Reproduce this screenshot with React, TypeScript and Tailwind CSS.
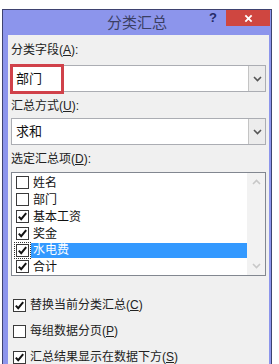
import * as React from "react";

const items = [
  { label: "姓名", checked: false },
  { label: "部门", checked: false },
  { label: "基本工资", checked: true },
  { label: "奖金", checked: true },
  { label: "水电费", checked: true, selected: true },
  { label: "合计", checked: true },
];

function Box({ checked }: { checked: boolean }) {
  return (
    <span className="flex h-[13px] w-[13px] shrink-0 items-center justify-center border border-[#3a3a3a] bg-white">
      {checked && (
        <svg viewBox="0 0 11 11" className="h-[11px] w-[11px]">
          <path d="M1.8 5.6 L4.2 8.2 L9.2 2.2" fill="none" stroke="#111" strokeWidth="2" />
        </svg>
      )}
    </span>
  );
}

function Chevron({ up }: { up?: boolean }) {
  return (
    <svg viewBox="0 0 9 6" className="h-[6px] w-[9px]">
      <path
        d={up ? "M1 5 L4.5 1.5 L8 5" : "M1 1 L4.5 4.5 L8 1"}
        fill="none"
        stroke="currentColor"
        strokeWidth="1.6"
      />
    </svg>
  );
}

function Combo({ value, marked }: { value: string; marked?: boolean }) {
  return (
    <div className="relative flex h-[27px] border border-[#abadb3] bg-white">
      <div className="flex flex-1 items-center pl-[4px] text-[13px] text-[#111]">{value}</div>
      <div className="flex w-[17px] items-center justify-center border-l border-[#c4c4c4] bg-[#ececec] text-[#555]">
        <Chevron />
      </div>
      {marked && (
        <div className="absolute left-[-2px] top-[-2px] h-[30px] w-[54px] border-[3px] border-[#d0414a]" />
      )}
    </div>
  );
}

function Label({ text, k, rest }: { text: string; k: string; rest?: string }) {
  return (
    <div className="h-[16px] text-[12px] leading-[16px] text-[#222]">
      {text}(<span className="underline">{k}</span>){rest ?? ":"}
    </div>
  );
}

export default function App() {
  return (
    <div className="h-[364px] w-[279px] overflow-hidden bg-white font-['Liberation_Sans','Noto_Sans_CJK_SC',sans-serif]">
      <div className="ml-[2px] mt-[9px] w-[270px] border border-[#3e4270] bg-[#8c95ec]">
        <div className="relative flex h-[25px] items-start justify-end">
          <div className="absolute inset-x-0 top-[3px] text-center text-[15px] leading-[20px] text-[#3b3f63]">
            分类汇总
          </div>
          <div className="mr-[9px] mt-[1px] text-[13px] font-bold leading-[14px] text-[#262a66]">?</div>
          <div className="mr-[1px] flex h-[16px] w-[44px] items-center justify-center bg-[#cf4640]">
            <svg viewBox="0 0 10 10" className="h-[9px] w-[9px]">
              <path d="M1.5 1.5 L8.5 8.5 M8.5 1.5 L1.5 8.5" stroke="#fff" strokeWidth="2" />
            </svg>
          </div>
        </div>
        <div className="ml-[5px] mr-[2px] h-[340px] bg-[#f0f0f0] px-[3px] pt-[7px]">
          <Label text="分类字段" k="A" />
          <div className="mt-[7px]">
            <Combo value="部门" marked />
          </div>
          <div className="mt-[6px]">
            <Label text="汇总方式" k="U" />
          </div>
          <div className="mt-[4px]">
            <Combo value="求和" />
          </div>
          <div className="mt-[6px]">
            <Label text="选定汇总项" k="D" />
          </div>
          <div className="mt-[5px] flex h-[104px] border border-[#828790] bg-white">
            <div className="flex flex-1 flex-col pt-[1px]">
              {items.map((it) => (
                <div key={it.label} className="flex h-[17px] items-center pl-[3px] text-[12px] text-[#111]">
                  <span className={it.selected ? "flex p-[1px] outline outline-1 outline-dotted outline-[#333]" : "flex p-[1px]"}>
                    <Box checked={it.checked} />
                  </span>
                  <span
                    className={
                      it.selected
                        ? "ml-[1px] flex h-[15px] flex-1 items-center bg-[#3399ff] pl-[2px] text-white"
                        : "ml-[1px] pl-[2px]"
                    }
                  >
                    {it.label}
                  </span>
                </div>
              ))}
            </div>
            <div className="flex w-[18px] flex-col items-center justify-between bg-[#f2f2f2] py-[6px] text-[#c8c8c8]">
              <Chevron up />
              <Chevron />
            </div>
          </div>
          <div className="ml-[2px] mt-[21px] flex flex-col gap-[10px] text-[12px] text-[#222]">
            <div className="flex h-[16px] items-center gap-[4px]">
              <Box checked />
              <span>
                替换当前分类汇总(<span className="underline">C</span>)
              </span>
            </div>
            <div className="flex h-[16px] items-center gap-[4px]">
              <Box checked={false} />
              <span>
                每组数据分页(<span className="underline">P</span>)
              </span>
            </div>
            <div className="flex h-[16px] items-center gap-[4px]">
              <Box checked />
              <span>
                汇总结果显示在数据下方(<span className="underline">S</span>)
              </span>
            </div>
          </div>
        </div>
      </div>
    </div>
  );
}
